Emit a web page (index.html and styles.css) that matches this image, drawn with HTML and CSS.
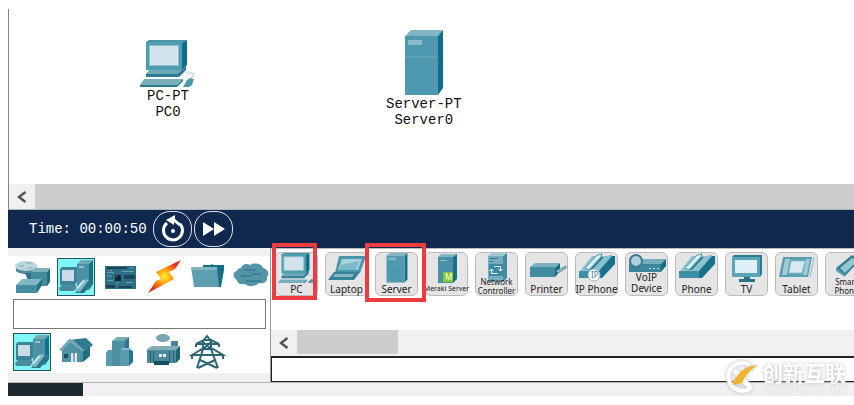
FILE: index.html
```
<!DOCTYPE html>
<html lang="en">
<head>
    <meta charset="UTF-8">
    <meta name="viewport" content="width=device-width, initial-scale=1.0">
    <title>Network Simulator</title>
    <link rel="stylesheet" href="styles.css">
</head>
<body>
    <!-- Shared icons -->
    <svg class="sprites" aria-hidden="true">
        <symbol id="icon-pc" viewBox="0 0 56 48">
            <path fill="#c9dde4" d="M6 3l4-3h37l-4 3z"/>
            <path fill="#4a97aa" d="M6 2l3-2h38l-5 3H6z"/>
            <path fill="#0d6f8c" d="M42 3l5-3v25l-5 5z"/>
            <path fill="#4f9db0" d="M6 2h36v28H6z"/>
            <path fill="#d3e3ec" stroke="#8fc0cc" d="M9.500 5.500h29v20h-29z"/>
            <path fill="#2b7c92" d="M6 34l4-4h32l4-4v4l-7 7H6z"/>
            <path fill="#6ba9b9" d="M10 30h32l-4 4H6z"/>
            <path fill="#79afbd" d="M4 39h39l-6 6H0z"/>
            <path fill="#287a91" d="M0 45h37l6-6v2l-6 6H0z"/>
            <path fill="#4f9aad" d="M47 40l3-2 4 1-2 6-3 2h-6z"/>
            <path fill="none" stroke="#b9cdd3" d="M45 33h7l2 2-3 3"/>
        </symbol>
        <symbol id="icon-server" viewBox="0 0 40 66">
            <path fill="#83b5c3" d="M1 6l6-6h32l-5 6z"/>
            <path fill="#0d6f8b" d="M34 6l5-6v58l-5 7z"/>
            <path fill="#4e98b0" d="M1 6h33v59H1z"/>
            <path fill="#88bdc9" d="M4 10h14v5H4z"/>
            <path stroke="#6cadbd" d="M2 27h31"/>
        </symbol>
        <symbol id="icon-end-devices" viewBox="0 0 38 38">
            <path fill="#7ef7f9" stroke="#28545e" stroke-width="2" d="M0 0h38v38H0z"/>
            <path fill="#72a9b5" d="M20 6l4-4h12l-4 4z"/>
            <path fill="#4c91a4" d="M20 6h12v26H20z"/>
            <path fill="#13718a" d="M32 6l4-4v24l-4 6z"/>
            <path fill="#8fc2cc" d="M22 8h5v2h-5z"/>
            <path fill="#3e8498" d="M3 11l2-2h15v15l-2 3H3z"/>
            <path fill="#cbdbe5" d="M5 12h12v11H5z"/>
            <path fill="#4a8b9d" d="M5 27h13l2 2-3 4H3l-1-3z"/>
            <path fill="#2c7488" d="M20 33l11-11 4-1v5l-8 9h-9z"/>
            <path fill="#7db6c4" d="M18 33l10-12 4 1-9 12z"/>
            <path fill="#c9e4ea" d="M19 30l7-8 2 1-7 8z"/>
        </symbol>
        <symbol id="icon-handset" viewBox="0 0 40 30">
            <path fill="#5ca6b7" d="M3 19L16 6l19-4-7 18-1 2H3z"/>
            <path fill="#8bc2ce" d="M3 18L15 3h20L22 18z"/>
            <path fill="#16728b" d="M22 18L35 3h3v8L25 25h-3z"/>
            <path fill="#3f8fa4" d="M2 18h20v7H2z"/>
            <path fill="#2f8196" d="M10 17L22 4h5L15 17z"/>
            <path fill="#d6edf2" stroke="#4a98aa" d="M8 15L20 2l5-1-1 3-12 13z"/>
        </symbol>
    </svg>

    <div class="app">
        <!-- Workspace -->
        <main class="workspace">
            <div class="node node-pc">
                <svg width="56" height="48"><use href="#icon-pc"/></svg>
                <span>PC-PT</span>
                <span>PC0</span>
            </div>
            <div class="node node-server">
                <svg width="40" height="66"><use href="#icon-server"/></svg>
                <span>Server-PT</span>
                <span>Server0</span>
            </div>
        </main>
        <div class="scrollbar">
            <button class="scroll-arrow" aria-label="Scroll left">
                <svg width="10" height="12" viewBox="0 0 10 12"><path fill="none" stroke="#555" stroke-width="2.500" d="M8.500 1L2 6l6.500 5"/></svg>
            </button>
            <div class="scroll-thumb"></div>
        </div>

        <!-- Time bar -->
        <div class="timebar">
            <span class="time">Time: 00:00:50</span>
            <button class="round" aria-label="Power cycle devices">
                <svg width="26" height="28" viewBox="0 0 26 28">
                    <path fill="none" stroke="#fff" stroke-width="3" d="M7 8a9.500 9.500 0 1 0 13 1"/>
                    <path fill="#fff" d="M6 5l9-5v4l6 5-2 2-5-4v3z"/>
                    <circle cx="13" cy="16" r="2" fill="#fff"/>
                </svg>
            </button>
            <button class="round" aria-label="Fast forward time">
                <svg width="24" height="16" viewBox="0 0 24 16"><path fill="#fff" d="M1 1l11 7-11 7zM12 1l11 7-11 7z"/></svg>
            </button>
        </div>

        <!-- Device panels -->
        <div class="panels">
            <div class="categories">
                <div class="category-row">
                    <button aria-label="Network devices">
                        <svg width="38" height="38" viewBox="0 0 38 38">
                            <path fill="#4b899a" d="M3 8v5c3 4 17 4 21 0V8z"/>
                            <ellipse cx="13" cy="8" rx="11" ry="5" fill="#bdd5dc"/>
                            <path stroke="#7eabb7" d="M6 8h5M13 5h6M14 10h6"/>
                            <path fill="#2b7188" d="M12 15h6v7h-3z"/>
                            <path fill="#81b2bf" d="M18 14l4-4h15l-3 4z"/>
                            <path fill="#438a9d" d="M18 14h16v14H18z"/>
                            <path fill="#206e82" d="M34 14l3-4v14l-3 4z"/>
                            <path fill="#83b6c4" d="M3 27l6-6h20l-5 6z"/>
                            <path fill="#438ca2" d="M3 27h21v8H3z"/>
                            <path fill="#1d7087" d="M24 27l5-6v6l-5 8z"/>
                        </svg>
                    </button>
                    <button aria-label="End devices"><svg width="38" height="38"><use href="#icon-end-devices"/></svg></button>
                    <button aria-label="Components">
                        <svg width="38" height="38" viewBox="0 0 38 38">
                            <path fill="#2b6f88" d="M4 8h31v23H4z"/>
                            <path fill="#1d4558" d="M6 9h20v2H6zM5 27h9v3H5zM18 28h13v2H18zM23 17h11v4H23z"/>
                            <path fill="#122833" d="M14 17h6v6h-6z"/>
                            <path stroke="#5fa3b6" d="M6 14.500h7M21 13.500h12M6 22.500h6M15 26.500l3-3M25 24.500h7"/>
                            <path stroke="#3f879c" stroke-width="2" d="M28 10h5M6 18h5"/>
                            <path fill="#c6935b" d="M15 18h1v1h-1zM25 24h2v1h-2zM9 12h2v1H9z"/>
                        </svg>
                    </button>
                    <button aria-label="Connections">
                        <svg width="38" height="38" viewBox="0 0 38 38">
                            <radialGradient id="bolt"><stop offset="0" stop-color="#fff22d"/><stop offset=".45" stop-color="#ff9d12"/><stop offset="1" stop-color="#e62b19"/></radialGradient>
                            <path fill="url(#bolt)" d="M36 2L11 14l5 7-5 2L3 35l26-14-5-7 6-3z"/>
                        </svg>
                    </button>
                    <button aria-label="Miscellaneous">
                        <svg width="38" height="38" viewBox="0 0 38 38">
                            <path fill="#176f83" d="M14 10V7h7l2-1 1 1h11v5l-3 17h-6z"/>
                            <path fill="#5d9fb1" d="M2 9h26l2 20H5z"/>
                            <path fill="#82b4c1" d="M2 9h26v3H3z"/>
                        </svg>
                    </button>
                    <button aria-label="Multiuser connection">
                        <svg width="38" height="38" viewBox="0 0 38 38">
                            <path fill="#5494a8" d="M8 10c1-4 6-5 9-3 5-3 12-1 13 3 5 1 7 6 4 9 1 5-4 7-8 6-4 4-11 4-14 1-5 1-8-1-8-4-5-2-4-9 0-9 0-2 2-3 4-3z"/>
                            <path stroke="#3a7f94" stroke-width="2" d="M11 12h12M8 18h10M19 16h9M13 23h15"/>
                        </svg>
                    </button>
                </div>
                <input class="device-name" type="text" aria-label="Device category">
                <div class="category-row">
                    <button aria-label="End devices group"><svg width="38" height="38"><use href="#icon-end-devices"/></svg></button>
                    <button aria-label="Home">
                        <svg width="38" height="38" viewBox="0 0 38 38">
                            <path fill="#4e91a4" d="M5 17l8-8 13 8v12H5z"/>
                            <path fill="#226c80" d="M26 17l7-6v12l-7 6z"/>
                            <path fill="#327a8e" d="M12 7l17-2 7 7-8 6z"/>
                            <path fill="#73aab7" d="M2 17L12 6l4 1 12 11h-3L13 9 5 18z"/>
                            <path fill="#174e5f" d="M7 21h4v4H7z"/>
                            <path fill="#e0e9ec" d="M14 20h6v9h-6z"/>
                            <path stroke="#315b68" d="M17 20v9"/>
                        </svg>
                    </button>
                    <button aria-label="Smart city">
                        <svg width="38" height="38" viewBox="0 0 38 38">
                            <path fill="#75aab8" d="M11 8l5-4h12l-3 4z"/>
                            <path fill="#4c8fa3" d="M11 8h13v25H11z"/>
                            <path fill="#27748c" d="M24 8l4-4v25l-4 4zM28 16l4 2v11l-4 4h-4z"/>
                            <path fill="#599aac" d="M5 20l2-3h4v16H5zM19 17h9v16h-9z"/>
                            <path fill="#8fb8c3" d="M19 17l3-2h9l-3 2z"/>
                        </svg>
                    </button>
                    <button aria-label="Industrial">
                        <svg width="38" height="38" viewBox="0 0 38 38">
                            <ellipse cx="18" cy="5" rx="7" ry="4" fill="#78a6b3"/>
                            <path fill="#4a8799" d="M26 8h7v8h-7z"/>
                            <path fill="#80afba" d="M2 16l5-3h28l-4 4H2z"/>
                            <path fill="#4b899b" d="M2 17h29v13H2z"/>
                            <path fill="#1c6376" d="M31 17l4-4v13l-4 4z"/>
                            <path stroke="#255f70" d="M5.500 18v11M8.500 18v11M24.500 18v11M28.500 18v11"/>
                            <path fill="#e5eff1" d="M14 21h3v3h-3zM18 21h3v3h-3z"/>
                            <path fill="#124f61" d="M9 28h15v4H9z"/>
                        </svg>
                    </button>
                    <button aria-label="Power grid">
                        <svg width="38" height="38" viewBox="0 0 38 38">
                            <path fill="none" stroke="#2d6675" stroke-width="2" d="M14 8l4-5 4 5v8l7 19M14 8v8L8 35M7 11l8-4h7l8 4zM3 22l10-6h11l10 6zM7 11v3M30 11v3M3 22v4M34 22v4M14 9l8 7M22 9l-8 7M11 27l17 8M26 27L9 35"/>
                        </svg>
                    </button>
                </div>
            </div>

            <div class="devices">
                <div class="device-list">
                    <button class="device">
                        <svg width="41" height="30" viewBox="0 0 56 44"><use href="#icon-pc" width="56" height="48"/></svg>
                        <span>PC</span>
                        <i class="mark mark-pc"></i>
                    </button>
                    <button class="device">
                        <svg width="40" height="30" viewBox="0 0 40 30">
                            <path fill="#4797aa" d="M12 3h27l-6 17H8z"/>
                            <path fill="#a8d0dc" d="M15 6h20l-4 11H11z"/>
                            <path fill="#7fb9c7" d="M14 12l18-4-3 9H12z"/>
                            <path fill="#378298" d="M7 19h26l-6 8H1z"/>
                            <path fill="#8bb9c5" d="M8 21h19l-2 3H6z"/>
                        </svg>
                        <span>Laptop</span>
                    </button>
                    <button class="device">
                        <svg width="22" height="30" viewBox="0 0 40 66" preserveAspectRatio="none"><use href="#icon-server" width="40" height="66"/></svg>
                        <span>Server</span>
                        <i class="mark mark-server"></i>
                    </button>
                    <button class="device">
                        <svg width="22" height="30" viewBox="0 0 22 30">
                            <path fill="#83b5c3" d="M2 4l3-3h16l-4 3z"/><path fill="#197189" d="M17 4l4-3v25l-4 4z"/><path fill="#4a90a7" d="M2 4h15v26H2z"/><path stroke="#92c1cd" d="M4 7.500h7"/>
                            <path fill="#85c52d" d="M7 19h10v10H7z"/><text x="9" y="27" class="icon-m">M</text>
                        </svg>
                        <span class="tiny">Meraki Server</span>
                    </button>
                    <button class="device">
                        <svg width="22" height="30" viewBox="0 0 22 30">
                            <path fill="#a3cbd5" d="M2 3l3-3h16l-4 3z"/><path fill="#428ca0" d="M17 3l4-3v25l-4 4z"/><path fill="#75afbf" d="M2 3h15v26H2z"/><path stroke="#2f7389" d="M4 5.500h8M4 8.500h3"/>
                            <path fill="#3b8aa3" d="M3 11h14v12H3z"/>
                            <path fill="none" stroke="#fff" d="M8 13.500h6.500V18M12.500 16l2 2 2-2M12 20.500H5.500V16M3.500 18l2-2 2 2"/>
                        </svg>
                        <span class="two">Network<br>Controller</span>
                    </button>
                    <button class="device">
                        <svg width="40" height="30" viewBox="0 0 40 30">
                            <path fill="#7bb1bf" d="M3 14l5-4h25l-5 5z"/><path fill="#428ca1" d="M3 14h25v10H3z"/><path fill="#156a80" d="M28 15l5-5v8l-5 6z"/><path fill="#9ac4cf" stroke="#5292a3" d="M29 18l10-5v2l-8 5z"/>
                        </svg>
                        <span>Printer</span>
                    </button>
                    <button class="device">
                        <svg width="40" height="30" viewBox="0 0 40 30"><use href="#icon-handset" width="40" height="30"/><circle cx="17" cy="22" r="6" fill="#fff" stroke="#8ebdc9"/><text x="14" y="25" class="icon-ip">IP</text></svg>
                        <span>IP Phone</span>
                    </button>
                    <button class="device">
                        <svg width="40" height="30" viewBox="0 0 40 30">
                            <path fill="#74adbc" d="M2 11l6-5h31l-5 5z"/><path fill="#3c869c" d="M2 11h32v8H2z"/><path fill="#176a80" d="M34 11l5-5v7l-5 6z"/><circle cx="9" cy="8" r="6" fill="#acd0da" stroke="#39798a" stroke-width="2"/><path stroke="#c8e0e6" d="M22 15.500h2M26 15.500h2M30 15.500h2"/>
                        </svg>
                        <span class="two large">VoIP<br>Device</span>
                    </button>
                    <button class="device">
                        <svg width="40" height="30"><use href="#icon-handset"/></svg>
                        <span>Phone</span>
                    </button>
                    <button class="device">
                        <svg width="32" height="30" viewBox="0 0 32 30">
                            <path fill="#247b92" d="M1 4l2-2h28v19l-2 3H1z"/><path fill="#5ba4b5" d="M1 4h28v20H1z"/><path fill="#deeff5" d="M4 7h22v13H4z"/><path fill="#257287" d="M13 24h6v2h5v3H8v-3h5z"/>
                        </svg>
                        <span>TV</span>
                    </button>
                    <button class="device">
                        <svg width="38" height="30" viewBox="0 0 38 30">
                            <path fill="#5a9fb1" d="M5 4h29l-4 20H1z"/><path fill="#9fcbd7" d="M7 6h5L9 22H4zM28 6h4l-3 16h-4z"/><path fill="#d8eaf1" stroke="#8fc0cc" d="M13 8h14l-3 12H11z"/><path stroke="#91b9c2" d="M36 4l-4 20"/>
                        </svg>
                        <span>Tablet</span>
                    </button>
                    <button class="device">
                        <svg width="30" height="30" viewBox="0 0 30 30">
                            <path fill="#347f94" d="M4 15L20 2l8 5-15 16z"/><path fill="#93c6d3" d="M8 15L20 5l5 3-12 12z"/><path fill="#5ba0b2" d="M4 15l9 7v2l-9-6z"/>
                        </svg>
                        <span class="two">Smart<br>Phone</span>
                    </button>
                </div>
                <div class="scrollbar scrollbar-light">
                    <button class="scroll-arrow" aria-label="Scroll devices left">
                        <svg width="10" height="12" viewBox="0 0 10 12"><path fill="none" stroke="#555" stroke-width="2.500" d="M8.500 1L2 6l6.500 5"/></svg>
                    </button>
                    <div class="scroll-thumb"></div>
                </div>
                <div class="description"></div>
            </div>
        </div>
        <footer class="statusbar"><div class="status-block"></div></footer>
    </div>

    <div class="watermark">
        <svg width="36" height="36" viewBox="0 0 36 36">
            <path fill="none" stroke="#fff" stroke-width="4" d="M27 6A14 14 0 1 0 29 28"/>
            <path stroke="#fff" stroke-width="5" d="M11 11l16 17"/>
            <path fill="#f2b32b" d="M9 26C14 14 22 7 35 6c-8 5-12 9-16 18z"/>
        </svg>
        <div>
            <strong lang="zh">创新互联</strong>
            <small>CHUANG XIN HU LIAN</small>
        </div>
    </div>
</body>
</html>
```
FILE: styles.css
```
* {
    box-sizing: border-box;
}

body {
    margin: 0;
    padding: 9px 0 9px 8px;
    background-color: #fff;
    font-family: "Noto Sans", sans-serif;
    overflow: hidden;
}

button {
    border: none;
    padding: 0;
    background: none;
    color: inherit;
    font-family: inherit;
    cursor: pointer;
}

svg {
    display: block;
    flex: none;
}

.sprites {
    position: absolute;
    width: 0;
    height: 0;
}

/* Workspace */
.workspace {
    position: relative;
    height: 175px;
    border-left: 1px solid #858585;
}

.node {
    position: absolute;
    display: flex;
    flex-direction: column;
    align-items: center;
    font: 14px/16px "Liberation Mono", monospace;
    color: #111;
}

.node-pc {
    left: 131px;
    top: 31px;
}

.node-server {
    left: 377px;
    top: 21px;
}

.scrollbar {
    display: flex;
    height: 26px;
    background-color: #cdcdcd;
    border-left: 1px solid #858585;
    border-bottom: 1px solid #a9b4c0;
}

.scroll-arrow {
    display: flex;
    align-items: center;
    justify-content: center;
    width: 26px;
    background-color: #f0f0f0;
}

/* Time bar */
.timebar {
    display: flex;
    align-items: center;
    gap: 2px;
    height: 38px;
    padding-left: 21px;
    background-color: #10284d;
    color: #fff;
}

.time {
    width: 122px;
    font: 14px/16px "Liberation Mono", monospace;
    white-space: nowrap;
}

.round {
    display: flex;
    align-items: center;
    justify-content: center;
    width: 39px;
    height: 36px;
    border: 1px solid #dce5ef;
    border-radius: 17px;
}

/* Panels */
.panels {
    display: flex;
    border-bottom: 1px solid #b5b5b5;
}

.categories {
    flex: none;
    width: 262px;
    border-top: 8px solid #f0f0f0;
    border-bottom: 9px solid #f0f0f0;
    padding: 2px 4px 2px 5px;
}

.category-row {
    display: flex;
    gap: 6px;
}

.device-name {
    display: block;
    width: 100%;
    height: 30px;
    margin: 3px 0 4px;
    border: 1px solid #777;
    outline: none;
}

.devices {
    flex: 1;
    min-width: 0;
    display: flex;
    flex-direction: column;
    border-left: 1px solid #999;
    border-top: 1px solid #bbb;
}

.device-list {
    flex: 1;
    display: flex;
    gap: 7px;
    padding: 3px 0 0 4px;
}

.device {
    position: relative;
    flex: none;
    display: flex;
    flex-direction: column;
    align-items: center;
    width: 43px;
    height: 44px;
    border: 1px solid #bbb;
    border-radius: 6px;
    background-color: #e5e5e5;
    color: #222;
    font-size: 10px;
    line-height: 12px;
    white-space: nowrap;
}

.device .tiny {
    font-size: 7px;
}

.device .two {
    margin-top: -6px;
    font-size: 8px;
    line-height: 9px;
}

.device .large {
    margin-top: -11px;
    font-size: 10px;
    line-height: 11px;
}

/* Red highlight frames */
.mark {
    position: absolute;
    z-index: 1;
    border: 4px solid #ee3b3f;
}

.mark-pc {
    inset: -10px 0 -5px -4px;
}

.mark-server {
    inset: -10px -9px -7px -11px;
}

.icon-m {
    font-size: 8px;
    fill: #fff;
}

.icon-ip {
    font-size: 8px;
    fill: #39798a;
}

.scrollbar-light {
    background-color: #f0f0f0;
    border: none;
}

.scrollbar-light .scroll-thumb {
    width: 101px;
    height: 24px;
    background-color: #cdcdcd;
}

.description {
    height: 26px;
    border: 2px solid #222;
    border-width: 2px 0 1px 1px;
}

.statusbar {
    height: 13px;
    background-color: #f0f0f0;
}

.status-block {
    width: 75px;
    height: 13px;
    background-color: #1d2b2f;
}

/* Watermark */
.watermark {
    position: absolute;
    right: 8px;
    top: 359px;
    display: flex;
    gap: 3px;
    color: #fff;
    filter: drop-shadow(0 0 2px #bbb);
}

.watermark strong,
.watermark small {
    display: block;
}

.watermark strong {
    font: bold 21px/26px "Noto Sans CJK SC", sans-serif;
}

.watermark small {
    font-size: 8px;
    line-height: 12px;
    opacity: 0.6;
}
```
